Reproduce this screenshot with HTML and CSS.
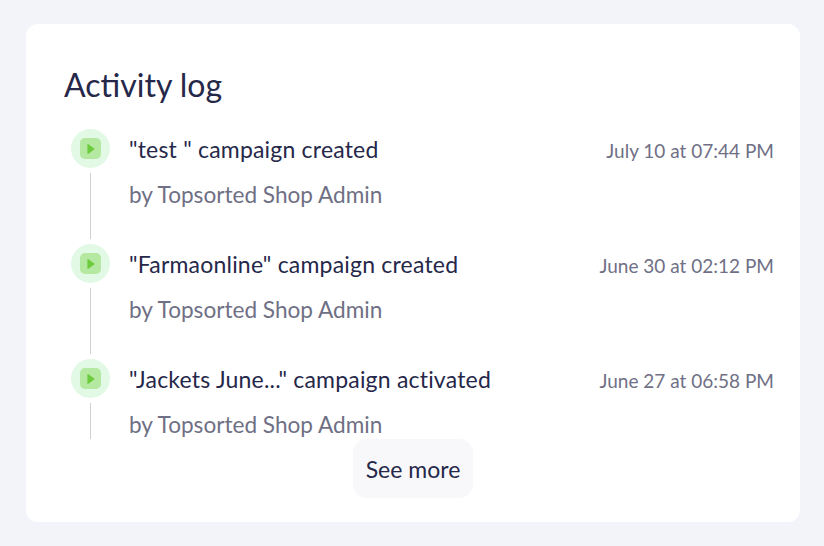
FILE: index.html
```html
<!DOCTYPE html>
<html lang="en">
<head>
    <meta charset="UTF-8">
    <title>Activity log</title>
    <link rel="stylesheet" href="styles.css">
</head>
<body>
    <div class="card">
        <h2 class="card-title">Activity log</h2>
        <div class="log-list">
            <div class="log-item">
                <div class="log-marker">
                    <div class="log-icon">
                        <span class="icon-box"><svg width="8" height="10" viewBox="1 0.500 6.500 9"><path d="M1 1.200v7.600c0 .5.5.8.9.5l5.200-3.800c.4-.3.4-.7 0-1L1.900.7C1.500.4 1 .7 1 1.200z" fill="#6ccb3d"/></svg></span>
                    </div>
                    <div class="log-line"></div>
                </div>
                <div class="log-body">
                    <div class="log-head">
                        <span class="log-title">"test " campaign created</span>
                        <span class="log-date">July 10 at 07:44 PM</span>
                    </div>
                    <div class="log-by">by Topsorted Shop Admin</div>
                </div>
            </div>
            <div class="log-item">
                <div class="log-marker">
                    <div class="log-icon">
                        <span class="icon-box"><svg width="8" height="10" viewBox="1 0.500 6.500 9"><path d="M1 1.200v7.600c0 .5.5.8.9.5l5.200-3.800c.4-.3.4-.7 0-1L1.900.7C1.500.4 1 .7 1 1.200z" fill="#6ccb3d"/></svg></span>
                    </div>
                    <div class="log-line"></div>
                </div>
                <div class="log-body">
                    <div class="log-head">
                        <span class="log-title">"Farmaonline" campaign created</span>
                        <span class="log-date">June 30 at 02:12 PM</span>
                    </div>
                    <div class="log-by">by Topsorted Shop Admin</div>
                </div>
            </div>
            <div class="log-item">
                <div class="log-marker">
                    <div class="log-icon">
                        <span class="icon-box"><svg width="8" height="10" viewBox="1 0.500 6.500 9"><path d="M1 1.200v7.600c0 .5.5.8.9.5l5.200-3.800c.4-.3.4-.7 0-1L1.900.7C1.500.4 1 .7 1 1.200z" fill="#6ccb3d"/></svg></span>
                    </div>
                    <div class="log-line"></div>
                </div>
                <div class="log-body">
                    <div class="log-head">
                        <span class="log-title">"Jackets June..." campaign activated</span>
                        <span class="log-date">June 27 at 06:58 PM</span>
                    </div>
                    <div class="log-by">by Topsorted Shop Admin</div>
                </div>
            </div>
        </div>
        <div class="card-foot">
            <button class="see-more">See more</button>
        </div>
    </div>
</body>
</html>
```

FILE: styles.css
```css
body {
    margin: 0;
    height: 546px;
    padding: 24px 24px 24px 26px;
    box-sizing: border-box;
    overflow: hidden;
    font-family: Lato, "Open Sans", sans-serif;
    background-color: #f3f4f9;
}
.card {
    height: 498px;
    box-sizing: border-box;
    padding: 42px 38px 24px;
    background: #ffffff;
    border-radius: 12px;
}
.card-title {
    margin: 0 0 25px;
    font-size: 32px;
    line-height: 38px;
    font-weight: 400;
    color: #26284a;
}
.log-list {
    height: 310px;
    margin-right: -12px;
    overflow: hidden;
}
.log-item {
    display: flex;
    height: 115px;
}
.log-marker {
    width: 39px;
    margin-left: 7px;
    display: flex;
    flex-direction: column;
    align-items: center;
}
.log-icon {
    width: 39px;
    height: 39px;
    flex: none;
    display: flex;
    align-items: center;
    justify-content: center;
    border-radius: 50%;
    background: #e2f9e6;
}
.icon-box {
    width: 21px;
    height: 21px;
    display: flex;
    align-items: center;
    justify-content: center;
    border-radius: 5px;
    background: #b5e8a0;
}
.log-line {
    width: 1px;
    height: 66px;
    margin-top: 5px;
    background: #cfcfd4;
}
.log-body {
    flex: 1;
    margin-left: 19px;
}
.log-head {
    display: flex;
    justify-content: space-between;
    align-items: baseline;
    height: 42px;
}
.log-title {
    font-size: 23px;
    line-height: 40px;
    letter-spacing: 0.2px;
    color: #26284a;
}
.log-date {
    font-size: 19px;
    color: #6f7085;
}
.log-by {
    font-size: 22.6px;
    line-height: 47px;
    color: #6f7085;
}
.card-foot {
    display: flex;
    justify-content: center;
}
.see-more {
    width: 120px;
    height: 59px;
    padding: 0;
    border: none;
    border-radius: 14px;
    background: #f8f8fa;
    font-family: inherit;
    font-size: 23px;
    color: #26284a;
}
```
